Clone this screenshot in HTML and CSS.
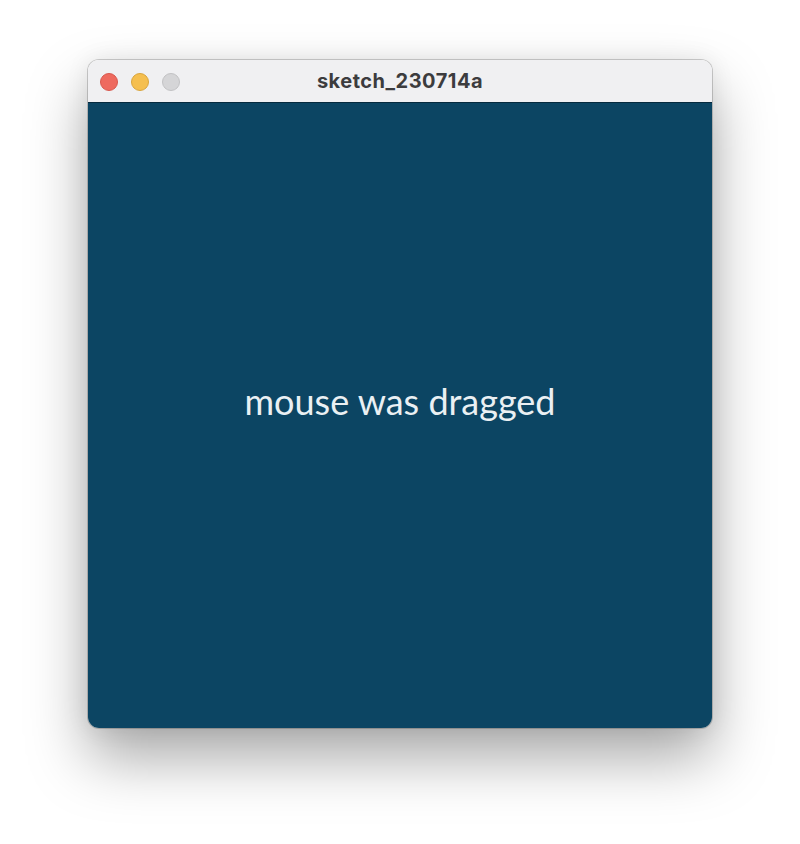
FILE: index.html
```html
<!DOCTYPE html>
<html>
<head>
<meta charset="utf-8">
<link rel="stylesheet" href="styles.css">
</head>
<body>
<div class="window">
  <div class="titlebar">
    <div class="lights">
      <span class="light red"></span>
      <span class="light yellow"></span>
      <span class="light gray"></span>
    </div>
    <div class="title">sketch_230714a</div>
  </div>
  <div class="canvas">
    <div class="message">mouse was dragged</div>
  </div>
</div>
</body>
</html>
```
FILE: styles.css
```css
html, body {
  margin: 0;
  padding: 0;
  background: #ffffff;
  width: 800px;
  height: 844px;
  overflow: hidden;
}
body {
  padding-top: 60px;
  box-sizing: border-box;
}
.window {
  width: 624px;
  margin-left: 88px;
  border-radius: 11px;
  overflow: hidden;
  box-shadow: 0 0 0 1px rgba(0,0,0,0.18), 0 30px 60px rgba(0,0,0,0.34), 0 0 24px rgba(0,0,0,0.08);
}
.titlebar {
  height: 42px;
  background: #f0f0f2;
  border-bottom: 1px solid #062a3e;
  display: flex;
  align-items: center;
  position: relative;
}
.lights {
  display: flex;
  gap: 13px;
  padding-left: 12px;
  padding-top: 1px;
}
.light {
  width: 18px;
  height: 18px;
  border-radius: 50%;
  box-sizing: border-box;
}
.red { background: #ee6a5f; border: 1px solid #d8584e; }
.yellow { background: #f5bf4f; border: 1px solid #d9a53d; }
.gray { background: #d5d5d7; border: 1px solid #c2c2c4; }
.title {
  position: absolute;
  left: 0;
  right: 0;
  top: 0;
  bottom: 0;
  display: flex;
  align-items: center;
  justify-content: center;
  font-family: Inter, "Liberation Sans", sans-serif;
  font-weight: 700;
  font-size: 20px;
  letter-spacing: 0.5px;
  color: #3c3c3e;
}
.canvas {
  height: 625px;
  background: #0c4563;
  display: flex;
  align-items: center;
  justify-content: center;
}
.message {
  font-family: Lato, "Open Sans", sans-serif;
  font-size: 36px;
  color: #eaf0f3;
  margin-top: -30px;
}
```
